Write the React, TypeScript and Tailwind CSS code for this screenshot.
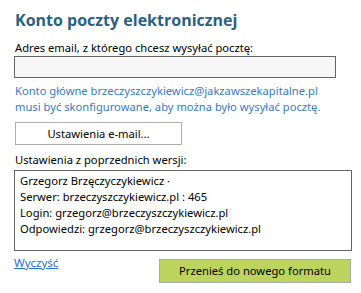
import React from "react";

export default function App() {
  const ui = { fontFamily: '"Noto Sans", "Open Sans", sans-serif' };
  return (
    <div className="w-[361px] h-[293px] bg-white text-black" style={ui}>
      <div className="flex flex-col pl-[15px] pt-[9px]">
        <div
          className="text-[16px] leading-[23px] font-bold text-[#2d5f80]"
          style={{ fontFamily: '"Open Sans", sans-serif' }}
        >
          Konto poczty elektronicznej
        </div>
        <div className="mt-[8px] text-[11.2px] leading-[16px]">
          Adres email, z którego chcesz wysyłać pocztę:
        </div>
        <div className="ml-[-1px] w-[322px] h-[22px] border border-[#646464] bg-[#f7f7f7]" />
        <div className="mt-[5px] text-[11.2px] leading-[16px] text-[#3a78c2]">
          <div>Konto główne brzeczyszczykiewicz@jakzawszekapitalne.pl</div>
          <div>musi być skonfigurowane, aby można było wysyłać pocztę.</div>
        </div>
        <button className="mt-[7px] w-[167px] h-[23px] border border-[#adadad] bg-white text-[11.2px] leading-[16px] flex items-center justify-center">
          Ustawienia e-mail...
        </button>
        <div className="mt-[7px] text-[11.2px] leading-[16px]">
          Ustawienia z poprzednich wersji:
        </div>
        <div className="mt-[2px] ml-[-1px] w-[338px] h-[81px] border border-[#646464] bg-white pl-[5px] pt-[2px] text-[11.2px] leading-[16px]">
          <div>Grzegorz Brzęczyczykiewicz ·</div>
          <div>Serwer: brzeczyszczykiewicz.pl : 465</div>
          <div>Login: grzegorz@brzeczyszczykiewicz.pl</div>
          <div>Odpowiedzi: grzegorz@brzeczyszczykiewicz.pl</div>
        </div>
        <div className="mt-[8px] flex items-start">
          <a className="mt-[-4px] ml-[-1px] text-[11.5px] leading-[16px] text-[#2a6fd6] underline">
            Wyczyść
          </a>
          <button className="ml-auto mr-[10px] w-[192px] h-[24px] border border-[#a9a9a9] bg-[#bdd45e] text-[11.2px] leading-[16px] flex items-center justify-center">
            Przenieś do nowego formatu
          </button>
        </div>
      </div>
    </div>
  );
}
